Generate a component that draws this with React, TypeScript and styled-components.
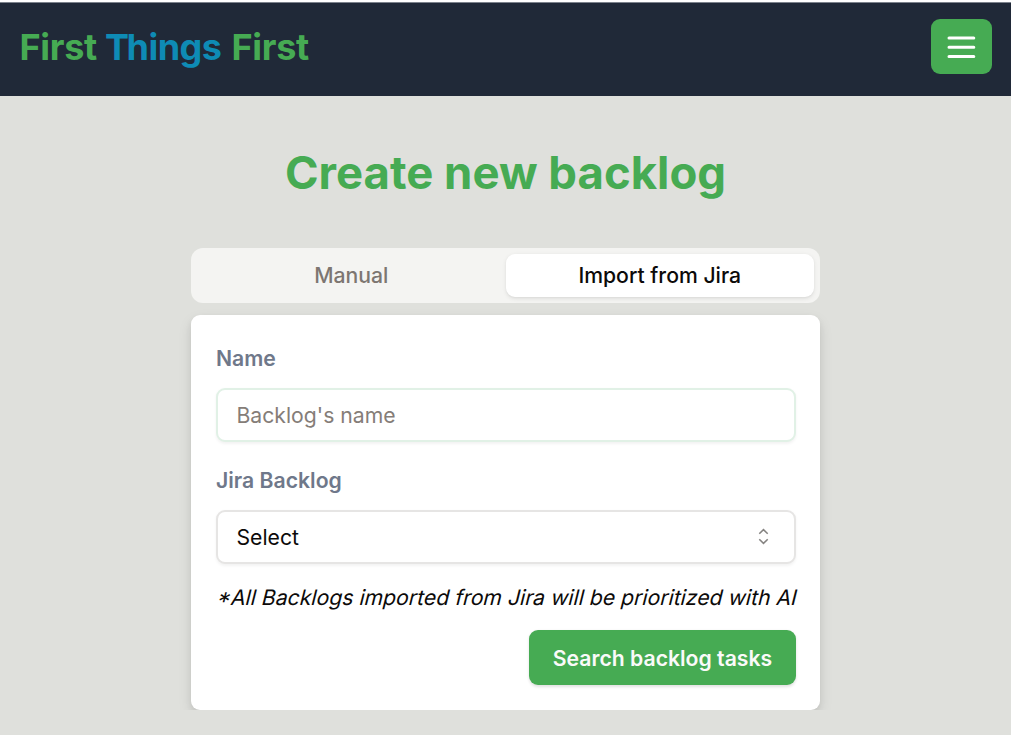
import React from "react";
import styled, { createGlobalStyle } from "styled-components";

const GlobalStyle = createGlobalStyle`
  *, *::before, *::after { box-sizing: border-box; }
  html, body { margin: 0; height: 100%; background: #dfe0dc; overflow: hidden; }
  body { font-family: Inter, sans-serif; font-size: 21.2px; line-height: 30px; color: #0c0a09; }
  button, input { font: inherit; margin: 0; }
`;

const Page = styled.div`
  border-top: 2px solid #fff;
  min-height: 735px;
  background: #dfe0dc;
`;

const Header = styled.header`
  display: flex;
  align-items: center;
  justify-content: space-between;
  height: 94px;
  padding: 0 19px 6px 19.5px;
  background: #202938;
  border-top: 1px solid #7c828c;
`;

const Logo = styled.div`
  display: flex;
  font-size: 36px;
  line-height: 44px;
  font-weight: 700;
`;

const LogoWord = styled.span<{ $color: string; $width: number; $spacing: number }>`
  width: ${(p) => p.$width}px;
  color: ${(p) => p.$color};
  letter-spacing: ${(p) => p.$spacing}px;
  white-space: nowrap;
`;

const TightLetter = styled.span`
  letter-spacing: -2.5px;
`;

const MenuButton = styled.button`
  display: flex;
  align-items: center;
  justify-content: center;
  width: 61px;
  height: 55px;
  padding: 0;
  border: 0;
  border-radius: 9px;
  background: #46ab53;
`;

const Main = styled.main`
  display: flex;
  flex-direction: column;
  align-items: center;
`;

const Title = styled.h1`
  margin: 49px 0 0;
  font-size: 45.5px;
  line-height: 55px;
  font-weight: 700;
  color: #46ab53;
`;

const TabList = styled.div`
  display: grid;
  grid-template-columns: 1fr 1fr;
  width: 629px;
  height: 54.5px;
  margin-top: 48px;
  padding: 6px;
  border-radius: 12px;
  background: #f4f4f2;
`;

const Tab = styled.button<{ $active?: boolean }>`
  height: 42.5px;
  padding: 0;
  border: 0;
  border-radius: 9px;
  font-weight: 500;
  color: ${(p) => (p.$active ? "#0c0a09" : "#7d7671")};
  background: ${(p) => (p.$active ? "#fff" : "transparent")};
  box-shadow: ${(p) => (p.$active ? "0 1.5px 4px rgba(0,0,0,.08), 0 1px 2px rgba(0,0,0,.04)" : "none")};
`;

const CardClip = styled.div`
  padding: 12.5px 24px 0;
  overflow: hidden;
`;

const Card = styled.form`
  display: flex;
  flex-direction: column;
  width: 629px;
  height: 394.5px;
  padding: 28px 24px 24px 25px;
  border-radius: 9px;
  background: #fff;
  box-shadow: 0 6px 14px rgba(0, 0, 0, .1), 0 3px 6px rgba(0, 0, 0, .06);
`;

const Label = styled.label`
  font-weight: 600;
  color: #6f788a;
`;

const Input = styled.input`
  width: 100%;
  height: 54px;
  margin: 15px 0 22.5px;
  padding: 0 18.5px;
  border: 2px solid #e1f1e6;
  border-radius: 9px;
  background: #fff;
  box-shadow: 0 1.5px 3px rgba(0, 0, 0, .05);
  outline: 0;
  &::placeholder { color: #857d78; opacity: 1; }
`;

const Select = styled.button`
  display: flex;
  align-items: center;
  justify-content: space-between;
  height: 54px;
  margin-top: 15px;
  padding: 0 19.5px 0 18.5px;
  border: 2px solid #e6e5e4;
  border-radius: 9px;
  background: #fff;
  color: #0c0a09;
  box-shadow: 0 1.5px 3px rgba(0, 0, 0, .05);
`;

const Note = styled.p`
  width: max-content;
  margin: 18.5px 0 18px 1.5px;
  letter-spacing: 0.01px;
  white-space: nowrap;
  transform: skewX(-14deg);
`;

const Asterisk = styled.span`
  font-feature-settings: "case";
`;

const Submit = styled.button`
  align-self: flex-end;
  width: 267px;
  height: 55px;
  padding: 0;
  border: 0;
  border-radius: 9px;
  background: #46ab53;
  color: #fafaf9;
  font-weight: 600;
  white-space: nowrap;
  box-shadow: 0 1.5px 3px rgba(0, 0, 0, .12);
`;

export default function App() {
  return (
    <>
      <GlobalStyle />
      <Page>
        <Header>
          <Logo>
            <LogoWord $color="#46ab53" $width={85.5} $spacing={-0.3}>First</LogoWord>
            <LogoWord $color="#0e8bb5" $width={126.5} $spacing={-0.5}>
              <TightLetter>T</TightLetter>hings
            </LogoWord>
            <LogoWord $color="#46ab53" $width={80} $spacing={-0.3}>First</LogoWord>
          </Logo>
          <MenuButton type="button" aria-label="Menu">
            <svg width="36" height="36" viewBox="0 0 36 36" fill="none" stroke="#fff" strokeWidth="3" strokeLinecap="round">
              <path d="M5 9h24.8M5 18.2h24.8M5 27.4h24.8" />
            </svg>
          </MenuButton>
        </Header>
        <Main>
          <Title>Create new backlog</Title>
          <TabList>
            <Tab type="button">Manual</Tab>
            <Tab type="button" $active>Import from Jira</Tab>
          </TabList>
          <CardClip>
            <Card>
              <Label htmlFor="name">Name</Label>
              <Input id="name" placeholder="Backlog's name" />
              <Label>Jira Backlog</Label>
              <Select type="button">
                <span>Select</span>
                <svg width="23" height="23" viewBox="0 0 24 24" fill="none" stroke="#858381" strokeWidth="1.6">
                  <path d="M7.6 9.2 12 4.8l4.4 4.4M7.6 14.8l4.4 4.4 4.4-4.4" />
                </svg>
              </Select>
              <Note><Asterisk>*</Asterisk>All Backlogs imported from Jira will be prioritized with AI</Note>
              <Submit type="button">Search backlog tasks</Submit>
            </Card>
          </CardClip>
        </Main>
      </Page>
    </>
  );
}
